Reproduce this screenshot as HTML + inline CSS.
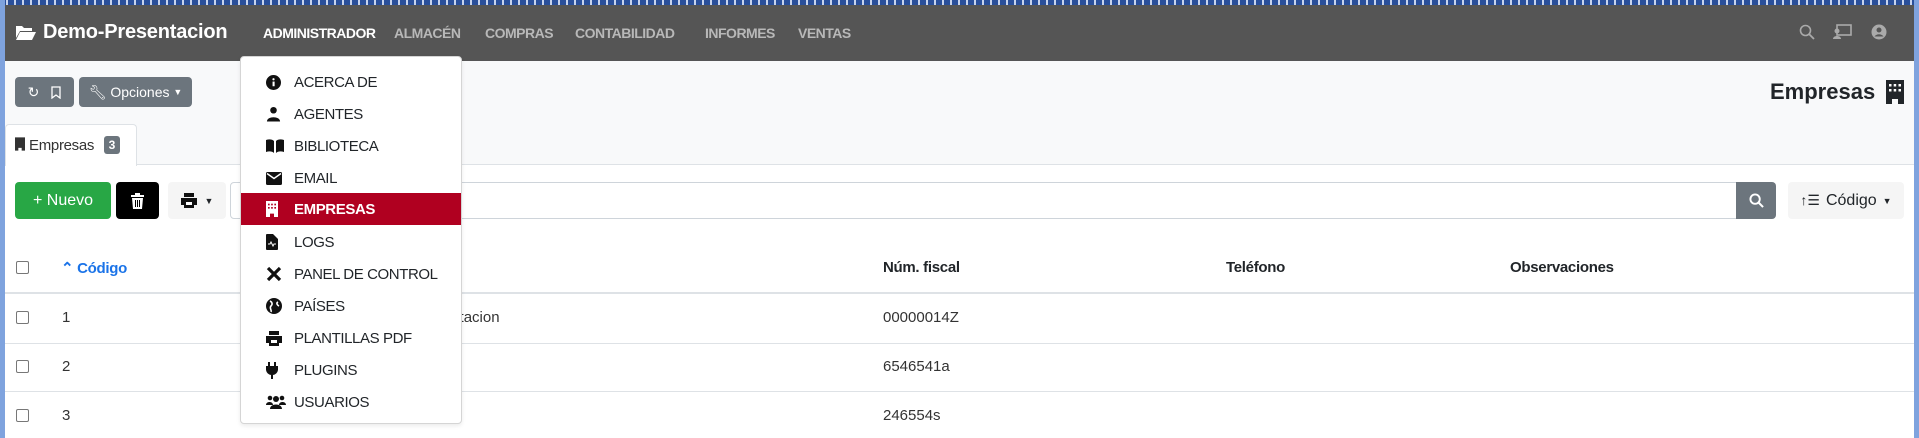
<!DOCTYPE html>
<html><head><meta charset="utf-8"><style>
*{margin:0;padding:0;box-sizing:border-box}
body{width:1919px;height:438px;overflow:hidden;position:relative;background:#fff;font-family:"Liberation Sans",sans-serif;color:#212529}
.a{position:absolute}
#nav{left:0;top:0;width:1919px;height:61px;background:#555}
#topline{left:0;top:0;width:1919px;height:5px;background:repeating-linear-gradient(90deg,#2a4f9a 0 6px,#c8d4ee 6px 8px);}
#leftb{left:0;top:0;width:5px;height:438px;background:#7fa3de}
#rightb{left:1914px;top:0;width:5px;height:438px;background:#7fa3de}
.nv{top:25px;font-size:14px;font-weight:bold;color:#b8b8b8;letter-spacing:-0.5px}
#sub{left:5px;top:61px;width:1909px;height:104px;background:#f8f9fa;border-bottom:1px solid #dee2e6}
.btn{border-radius:4px;display:flex;align-items:center;justify-content:center;font-size:14px}
.dd{left:240px;top:56px;width:222px;height:368px;background:#fff;border:1px solid #d5d5d5;border-radius:4px;box-shadow:0 2px 4px rgba(0,0,0,.08)}
.it{position:absolute;left:0;width:220px;height:32px;font-size:15px;letter-spacing:-0.4px;color:#212529;display:flex;align-items:center}
.it svg{position:absolute;left:25px}
.it span{position:absolute;left:53px}
.th{top:259px;font-size:15px;font-weight:bold;letter-spacing:-0.3px}
.td{font-size:15px;color:#333}
.cb{width:13px;height:13px;border:1px solid #777;border-radius:2px;background:#fff}
.hl{left:5px;width:1909px;height:1px;background:#dee2e6}
</style></head><body>
<div class="a" id="nav"></div>
<div class="a" id="topline"></div>
<svg class="a" style="left:15px;top:24px" width="22" height="16" viewBox="0 0 22 16"><path d="M1 2h6l2 2h8v3H5L1 14z" fill="#fff"/><path d="M5 8h16l-4 8H1z" fill="#fff"/></svg>
<div class="a" style="left:43px;top:21px;font-size:20px;font-weight:bold;color:#fff;letter-spacing:-0.2px">Demo-Presentacion</div>
<div class="a nv" style="left:263px;color:#fff">ADMINISTRADOR</div>
<div class="a nv" style="left:394px">ALMACÉN</div>
<div class="a nv" style="left:485px">COMPRAS</div>
<div class="a nv" style="left:575px">CONTABILIDAD</div>
<div class="a nv" style="left:705px">INFORMES</div>
<div class="a nv" style="left:798px">VENTAS</div>
<svg class="a" style="left:1799px;top:24px" width="16" height="16" viewBox="0 0 16 16"><circle cx="6.5" cy="6.5" r="5" stroke="#aaa" stroke-width="1.6" fill="none"/><path d="M10 10l5 5" stroke="#aaa" stroke-width="1.8"/></svg>
<svg class="a" style="left:1832px;top:24px" width="20" height="16" viewBox="0 0 20 16"><rect x="5" y="1" width="14" height="10" fill="none" stroke="#aaa" stroke-width="1.6"/><circle cx="5" cy="7" r="2.5" fill="#aaa"/><path d="M1 15c0-4 8-4 8 0z" fill="#aaa"/></svg>
<svg class="a" style="left:1871px;top:24px" width="16" height="16" viewBox="0 0 16 16"><circle cx="8" cy="8" r="7.5" fill="#aaa"/><circle cx="8" cy="6" r="2.5" fill="#555"/><path d="M3.5 12.5c2-3 7-3 9 0" fill="#555"/></svg>

<div class="a" id="sub"></div>
<div class="a btn" style="left:15px;top:77px;width:59px;height:30px;background:#6c757d;color:#fff;gap:12px"><span>↻</span><svg width="10" height="13" viewBox="0 0 10 13"><path d="M1 1h8v11l-4-3-4 3z" fill="none" stroke="#fff" stroke-width="1.3"/></svg></div>
<div class="a btn" style="left:79px;top:77px;width:113px;height:30px;background:#6c757d;color:#fff">🔧&#xFE0E;&nbsp;Opciones&nbsp;<span style="font-size:9px">▼</span></div>
<div class="a" style="left:1770px;top:79px;font-size:22px;font-weight:bold">Empresas</div>
<svg class="a" style="left:1886px;top:80px" width="18" height="24" viewBox="0 0 18 24"><path d="M0 0h18v24h-6v-5h-6v5H0z" fill="#212529"/><g fill="#fff"><rect x="3" y="4" width="2.5" height="2.5"/><rect x="7.7" y="4" width="2.5" height="2.5"/><rect x="12.5" y="4" width="2.5" height="2.5"/><rect x="3" y="9" width="2.5" height="2.5"/><rect x="7.7" y="9" width="2.5" height="2.5"/><rect x="12.5" y="9" width="2.5" height="2.5"/></g></svg>
<div class="a" style="left:5px;top:124px;width:132px;height:42px;background:#fff;border:1px solid #dee2e6;border-bottom:none;border-radius:4px 4px 0 0"></div>
<svg class="a" style="left:15px;top:137px" width="10" height="14" viewBox="0 0 18 24"><path d="M0 0h18v24h-6v-5h-6v5H0z" fill="#333"/></svg>
<div class="a" style="left:29px;top:137px;font-size:15px;color:#333;letter-spacing:-0.3px">Empresas</div>
<div class="a" style="left:104px;top:136px;width:16px;height:18px;background:#6c757d;color:#fff;font-size:12px;font-weight:bold;border-radius:3px;text-align:center;line-height:18px">3</div>

<div class="a btn" style="left:15px;top:182px;width:96px;height:37px;background:#28a745;color:#fff;font-size:16px">+&nbsp;Nuevo</div>
<div class="a btn" style="left:116px;top:182px;width:43px;height:37px;background:#000"><svg width="13" height="16" viewBox="0 0 13 16"><path d="M0 2h13v2H0zM4 0h5v2H4zM1 5h11l-1 11H2z" fill="#fff"/><path d="M4.5 7v7M6.5 7v7M8.5 7v7" stroke="#000" stroke-width="1"/></svg></div>
<div class="a btn" style="left:168px;top:182px;width:58px;height:37px;background:#f5f5f5;gap:8px"><svg width="16" height="15" viewBox="0 0 16 15"><path d="M3 0h10v4H3zM0 5h16v7h-3v3H3v-3H0z" fill="#111"/><rect x="5" y="9" width="6" height="3" fill="#fff"/></svg><span style="font-size:9px">▼</span></div>
<div class="a" style="left:230px;top:182px;width:1507px;height:37px;border:1px solid #ced4da;border-radius:4px 0 0 4px"></div>
<div class="a btn" style="left:1736px;top:182px;width:40px;height:37px;background:#6c757d;border-radius:0 4px 4px 0"><svg width="15" height="15" viewBox="0 0 16 16"><circle cx="6.5" cy="6.5" r="5" stroke="#fff" stroke-width="2" fill="none"/><path d="M10 10l5 5" stroke="#fff" stroke-width="2.2"/></svg></div>
<div class="a btn" style="left:1788px;top:182px;width:116px;height:37px;background:#f5f5f5;font-size:16px;gap:6px"><span style="font-size:14px">↑☰</span>Código <span style="font-size:9px">▼</span></div>

<div class="a cb" style="left:16px;top:261px"></div>
<div class="a th" style="left:61px;color:#1a73e8">⌃ Código</div>
<div class="a th" style="left:883px">Núm. fiscal</div>
<div class="a th" style="left:1226px">Teléfono</div>
<div class="a th" style="left:1510px">Observaciones</div>
<div class="a hl" style="top:292px;height:2px"></div>
<div class="a cb" style="left:16px;top:311px"></div><div class="a td" style="left:62px;top:309px">1</div><div class="a td" style="left:367px;top:309px">Demo-Presentacion</div><div class="a td" style="left:883px;top:309px">00000014Z</div>
<div class="a hl" style="top:343px"></div>
<div class="a cb" style="left:16px;top:360px"></div><div class="a td" style="left:62px;top:358px">2</div><div class="a td" style="left:883px;top:358px">6546541a</div>
<div class="a hl" style="top:391px"></div>
<div class="a cb" style="left:16px;top:409px"></div><div class="a td" style="left:62px;top:407px">3</div><div class="a td" style="left:330px;top:407px">Empresa de prueba</div><div class="a td" style="left:883px;top:407px">246554s</div>

<div class="a dd">
<div class="it" style="top:9px"><svg width="15" height="15" viewBox="0 0 16 16"><circle cx="8" cy="8" r="8" fill="#111"/><rect x="7" y="7" width="2.2" height="5" fill="#fff"/><circle cx="8" cy="4.5" r="1.2" fill="#fff"/></svg><span>ACERCA DE</span></div>
<div class="it" style="top:41px"><svg width="15" height="16" viewBox="0 0 16 16"><circle cx="8" cy="4" r="3.5" fill="#111"/><path d="M1 16c0-6 14-6 14 0z" fill="#111"/></svg><span>AGENTES</span></div>
<div class="it" style="top:73px"><svg width="18" height="14" viewBox="0 0 18 14"><path d="M0 1c3-1 6-1 8 1v12C6 12 3 12 0 13zM18 1c-3-1-6-1-8 1v12c2-2 5-2 8-1z" fill="#111"/></svg><span>BIBLIOTECA</span></div>
<div class="it" style="top:105px"><svg width="16" height="13" viewBox="0 0 16 13"><rect width="16" height="13" rx="1.5" fill="#111"/><path d="M1 1.5l7 5 7-5" stroke="#fff" stroke-width="1.4" fill="none"/></svg><span>EMAIL</span></div>
<div class="it" style="top:136px;height:32px;background:#b00020;color:#fff;font-weight:bold"><svg width="12" height="16" viewBox="0 0 18 24"><path d="M0 0h18v24h-6v-5h-6v5H0z" fill="#fff"/><g fill="#b00020"><rect x="3" y="4" width="2.5" height="2.5"/><rect x="7.7" y="4" width="2.5" height="2.5"/><rect x="12.5" y="4" width="2.5" height="2.5"/><rect x="3" y="9" width="2.5" height="2.5"/><rect x="7.7" y="9" width="2.5" height="2.5"/><rect x="12.5" y="9" width="2.5" height="2.5"/></g></svg><span>EMPRESAS</span></div>
<div class="it" style="top:169px"><svg width="12" height="16" viewBox="0 0 12 16"><path d="M0 1a1 1 0 011-1h6l5 5v10a1 1 0 01-1 1H1a1 1 0 01-1-1z" fill="#111"/><path d="M2 10h2l1-2 2 4 1-2h2" stroke="#fff" fill="none" stroke-width="1"/></svg><span>LOGS</span></div>
<div class="it" style="top:201px"><svg width="16" height="16" viewBox="0 0 16 16"><path d="M2 2l12 12M14 2L2 14" stroke="#111" stroke-width="3.2"/></svg><span>PANEL DE CONTROL</span></div>
<div class="it" style="top:233px"><svg width="16" height="16" viewBox="0 0 16 16"><circle cx="8" cy="8" r="8" fill="#111"/><path d="M4 3c2 1 3 3 1 5s1 4 0 6M12 4c-2 1-1 3 1 4" stroke="#fff" stroke-width="1.6" fill="none"/></svg><span>PAÍSES</span></div>
<div class="it" style="top:265px"><svg width="16" height="15" viewBox="0 0 16 15"><path d="M3 0h10v4H3zM0 5h16v7h-3v3H3v-3H0z" fill="#111"/><rect x="5" y="9" width="6" height="3" fill="#fff"/></svg><span>PLANTILLAS PDF</span></div>
<div class="it" style="top:297px"><svg width="12" height="17" viewBox="0 0 12 17"><path d="M3 0v4M9 0v4" stroke="#111" stroke-width="2"/><path d="M0 4h12v4a6 6 0 01-5 5v4H5v-4A6 6 0 010 8z" fill="#111"/></svg><span>PLUGINS</span></div>
<div class="it" style="top:329px"><svg width="20" height="14" viewBox="0 0 20 14"><circle cx="4" cy="3" r="2.3" fill="#111"/><circle cx="16" cy="3" r="2.3" fill="#111"/><circle cx="10" cy="4" r="3" fill="#111"/><path d="M0 10c0-4 7-4 7 0zM13 10c0-4 7-4 7 0zM4 14c0-6 12-6 12 0z" fill="#111"/></svg><span>USUARIOS</span></div>
</div>
<div class="a" id="leftb"></div>
<div class="a" id="rightb"></div>
</body></html>
